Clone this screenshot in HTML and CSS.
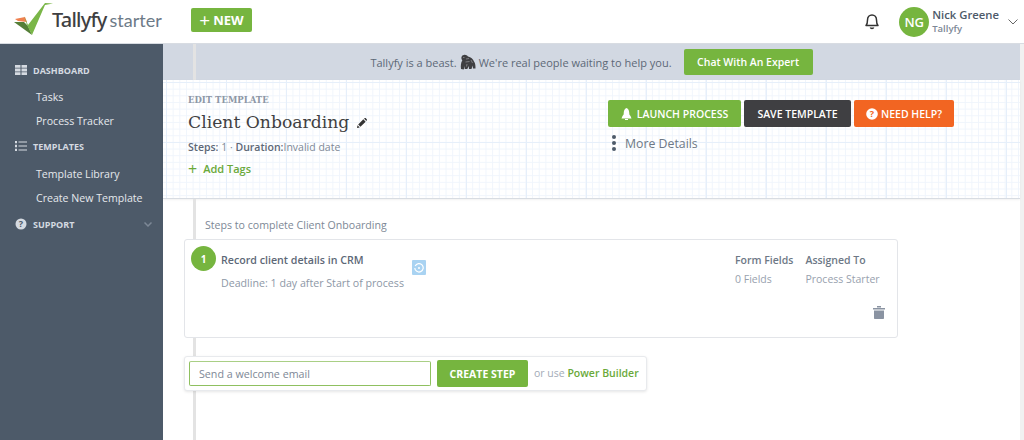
FILE: index.html
```html
<!DOCTYPE html>
<html lang="en">

<head>
    <meta charset="UTF-8">
    <meta name="viewport" content="width=device-width, initial-scale=1.0">
    <title>Tallyfy - Edit Template</title>
    <link rel="stylesheet" href="styles.css">
</head>

<body>
    <!-- Top bar -->
    <header class="topbar">
        <div class="logo">
            <svg class="logo-mark" width="38" height="38" viewBox="0 0 38 38">
                <path d="M0 20 L10 20 L14 24 L18 33 Z" fill="#557f38"/>
                <path d="M1 17 L11 15 L13 20 L4 19 Z" fill="#f0804e"/>
                <path d="M10 14 L14 23 L31 1 L39 1.500 L31 3 L18 33 L13 23 Z" fill="#7ab648"/>
            </svg>
            <span class="logo-name">Tallyfy</span>
            <span class="logo-plan">starter</span>
        </div>
        <button class="btn btn-green btn-new"><span class="plus">+</span>NEW</button>
        <div class="topbar-right">
            <svg class="bell" width="16" height="17" viewBox="0 0 16 17" fill="none" stroke="#333" stroke-width="1.5">
                <path d="M2 12.5 C3.5 11 3.5 9.5 3.5 7 C3.5 4 5.5 2 8 2 C10.5 2 12.5 4 12.5 7 C12.5 9.5 12.5 11 14 12.5 Z" stroke-linejoin="round"/>
                <path d="M6.3 14.5 C6.8 15.8 9.2 15.8 9.7 14.5"/>
            </svg>
            <div class="avatar">NG</div>
            <div class="user">
                <div class="user-name">Nick Greene</div>
                <div class="user-org">Tallyfy</div>
            </div>
            <svg class="caret" width="10" height="6" viewBox="0 0 10 6" fill="none" stroke="#666" stroke-width="1">
                <path d="M0.5 0.5 L5 5 L9.5 0.5"/>
            </svg>
        </div>
    </header>

    <div class="layout">
        <!-- Side menu -->
        <aside class="sidebar">
            <div class="nav-head nav-head-first">
                <svg width="12" height="10" viewBox="0 0 12 10" fill="#d5dae1">
                    <path d="M0 0h5.5v2.800H0zM6.5 0H12v2.800H6.500zM0 3.600h5.500v2.800H0zM6.500 3.600H12v2.800H6.500zM0 7.200h5.500V10H0zM6.500 7.200H12V10H6.500z"/>
                </svg>
                DASHBOARD
            </div>
            <a class="nav-link">Tasks</a>
            <a class="nav-link">Process Tracker</a>
            <div class="nav-head nav-head-templates">
                <svg width="12" height="10" viewBox="0 0 12 10" fill="#d5dae1">
                    <path d="M3.500 .5H12v1H3.500zM3.500 4.500H12v1H3.500zM3.500 8.500H12v1H3.500zM0 0h2v2H0zM.5 2.500h1v1h-1zM0 4h2v2H0zM.5 6.500h1v1h-1zM0 8h2v2H0z"/>
                </svg>
                TEMPLATES
            </div>
            <a class="nav-link">Template Library</a>
            <a class="nav-link">Create New Template</a>
            <div class="nav-head nav-head-support">
                <svg width="12" height="12" viewBox="0 0 12 12">
                    <circle cx="6" cy="6" r="5.500" fill="#d5dae1"/>
                    <text x="6" y="9" text-anchor="middle" class="help-mark" fill="#4d5a69">?</text>
                </svg>
                SUPPORT
                <svg class="nav-caret" width="8" height="5" viewBox="0 0 8 5" fill="none" stroke="#7d8896" stroke-width="1.500">
                    <path d="M.5 .5 L4 4 L7.500 .5"/>
                </svg>
            </div>
        </aside>

        <main class="main">
            <div class="banner">
                <span>Tallyfy is a beast.</span>
                <svg class="gorilla" width="16" height="16" viewBox="0 0 16 16">
                    <path d="M1.500 5 C1 3 2 1 4 1 C5.500 .5 7 1.500 8 2.500 C11 3 13 5 14 7.500 C15.500 9 15.500 12 15.500 14.500 L13 14.500 L12.500 11.500 L11.500 15 L9 15 L8.700 12 L7.300 15 L4.700 15 L5 12 L3.700 15.500 L1 15 C.5 12 1 8 2.300 6.500 Z" fill="#3f3f42"/>
                    <path d="M6 5 L9 4.500 M5.500 8 L9.500 7.500 M11 6 L12.500 9 M7 10 L6.500 12.500 M3 3.500 L4.500 3.500" fill="none" stroke="#8d8d90" stroke-width=".8"/>
                </svg>
                <span>We're real people waiting to help you.</span>
                <button class="btn btn-green btn-chat">Chat With An Expert</button>
            </div>

            <section class="template-head">
                <div class="template-info">
                    <div class="eyebrow">EDIT TEMPLATE</div>
                    <h1 class="template-title">Client Onboarding
                        <svg width="10" height="10" viewBox="0 0 11 11" fill="#333">
                            <path d="M0 11 L.6 8 L3 10.400 Z M1.300 7.200 L7 1.500 L9.500 4 L3.800 9.700 Z M7.800 .7 L8.500 0 C9 -.2 9.300 0 9.700 .3 L10.700 1.300 C11 1.700 11.100 2.100 10.800 2.500 L10.300 3.200 Z"/>
                        </svg>
                    </h1>
                    <div class="template-meta"><b>Steps:</b> 1 · <b>Duration:</b>Invalid date</div>
                    <div class="add-tags"><span class="add-plus">+</span>Add Tags</div>
                </div>
                <div class="template-actions">
                    <div class="action-row">
                        <button class="btn btn-green btn-action">
                            <svg width="11" height="12" viewBox="0 0 11 12" fill="#fff">
                                <path d="M5.500 0 C7.500 .5 8.300 3 8.300 5.500 C8.300 6.500 8.500 7 9.500 8 L10.500 10.500 L.5 10.500 L1.500 8 C2.500 7 2.700 6.500 2.700 5.500 C2.700 3 3.500 .5 5.500 0 Z M4 11 L7 11 L7 12 L4 12 Z"/>
                            </svg>
                            LAUNCH PROCESS
                        </button>
                        <button class="btn btn-dark btn-action">SAVE TEMPLATE</button>
                        <button class="btn btn-orange btn-action">
                            <svg width="12" height="12" viewBox="0 0 12 12">
                                <circle cx="6" cy="6" r="5.800" fill="#fff"/>
                                <text x="6" y="9.300" text-anchor="middle" class="help-mark" fill="#f26522">?</text>
                            </svg>
                            NEED HELP?
                        </button>
                    </div>
                    <div class="more-details">
                        <span class="dots"><i></i><i></i><i></i></span>
                        More Details
                    </div>
                </div>
            </section>

            <section class="steps">
                <div class="steps-title">Steps to complete Client Onboarding</div>
                <div class="step-card">
                    <div class="step-num">1</div>
                    <div class="step-body">
                        <div class="step-name">Record client details in CRM</div>
                        <div class="step-deadline">Deadline: 1 day after Start of process</div>
                    </div>
                    <div class="step-tag">
                        <svg width="10" height="10" viewBox="0 0 10 10" fill="none" stroke="#fff" stroke-width="1.200">
                            <path d="M1.200 3 A4.200 4.200 0 1 1 .8 5"/>
                            <circle cx="5" cy="5" r="1" fill="#fff" stroke="none"/>
                        </svg>
                    </div>
                    <div class="step-col step-col-fields">
                        <div class="col-label">Form Fields</div>
                        <div class="col-value">0 Fields</div>
                    </div>
                    <div class="step-col">
                        <div class="col-label">Assigned To</div>
                        <div class="col-value">Process Starter</div>
                    </div>
                    <svg class="trash" width="12" height="13" viewBox="0 0 12 13" fill="#8a93a2">
                        <path d="M0 2h12v1.500H0zM4 0h4v1.500H4zM1 4.500h10V12c0 .6-.4 1-1 1H2c-.6 0-1-.4-1-1z"/>
                    </svg>
                </div>
                <div class="new-step">
                    <input class="new-step-input" type="text" placeholder="Send a welcome email">
                    <button class="btn btn-green btn-create">CREATE STEP</button>
                    <span class="or-use">or use <a class="power">Power Builder</a></span>
                </div>
            </section>
        </main>
    </div>
</body>

</html>
```
FILE: styles.css
```css
* {
    box-sizing: border-box;
}

body {
    margin: 0;
    height: 440px;
    overflow: hidden;
    font-family: "Open Sans", sans-serif;
    font-size: 11px;
    color: #4d5a69;
    background-color: #fff;
}

/* Top bar */
.topbar {
    height: 44px;
    display: flex;
    align-items: center;
    background-color: #fff;
    border-bottom: 1px solid #d8dce2;
}

.logo {
    width: 191px;
    display: flex;
    align-items: center;
    padding-left: 14px;
    height: 44px;
}

.logo-mark {
    margin-top: -1px;
    overflow: visible;
}

.logo-name {
    margin-top: -4px;
    font-family: "Noto Sans", sans-serif;
    font-size: 20px;
    font-weight: 500;
    letter-spacing: -0.800px;
    color: #3f3f42;
}

.logo-plan {
    margin-top: -4px;
    margin-left: 3px;
    font-family: "Lato", sans-serif;
    font-size: 18px;
    color: #6d7a87;
}

.btn {
    border: none;
    border-radius: 2px;
    color: #fff;
    font-family: "Open Sans", sans-serif;
    font-weight: 600;
    cursor: pointer;
    padding: 0;
}

.btn-green {
    background-color: #76b53f;
}

.btn-dark {
    background-color: #3f3f42;
}

.btn-orange {
    background-color: #f26522;
}

.btn-new {
    width: 61px;
    height: 24px;
    font-size: 13px;
    font-weight: 700;
    margin-top: -3px;
    display: flex;
    align-items: center;
    justify-content: center;
}

.plus {
    font-size: 19px;
    font-weight: 400;
    line-height: 20px;
    margin-right: 3px;
}

.topbar-right {
    margin-left: auto;
    display: flex;
    align-items: center;
    padding-right: 6px;
}

.bell {
    margin-right: 19px;
}

.avatar {
    width: 30px;
    height: 30px;
    border-radius: 50%;
    background-color: #76b53f;
    color: #fff;
    font-size: 13px;
    font-weight: 600;
    display: flex;
    align-items: center;
    justify-content: center;
    margin-right: 3px;
}

.user {
    margin-right: 9px;
}

.user-name {
    font-size: 11.300px;
    font-weight: 600;
    line-height: 15px;
    color: #4d5a69;
}

.user-org {
    font-size: 9.500px;
    font-weight: 600;
    line-height: 14px;
    color: #7d8896;
}

/* Layout */
.layout {
    display: flex;
    height: 396px;
}

.sidebar {
    width: 163px;
    flex-shrink: 0;
    background-color: #4d5a69;
    color: #e6e9ed;
    padding-top: 19px;
}

.nav-head {
    position: relative;
    display: flex;
    align-items: center;
    height: 14px;
    padding-left: 15px;
    font-size: 9px;
    font-weight: 700;
    color: #d5dae1;
}

.nav-head svg {
    margin-right: 6px;
}

.nav-head-first {
    margin-bottom: 8px;
}

.nav-head-templates {
    margin-top: 6px;
    margin-bottom: 9px;
}

.nav-head-support {
    margin-top: 7px;
}

.nav-head svg.nav-caret {
    margin: 0;
    position: absolute;
    right: 11px;
    top: 5px;
}

.help-mark {
    font-size: 9px;
    font-weight: 700;
    font-family: "Open Sans", sans-serif;
}

.nav-link {
    display: block;
    padding-left: 36px;
    font-size: 10.600px;
    font-weight: 400;
    line-height: 24px;
    color: #e6e9ed;
}

/* The strip on the right is the page's scrollbar track */
.main {
    flex: 1;
    display: flex;
    flex-direction: column;
    border-right: 4px solid #f1f1f1;
}

/* Banner */
.banner {
    height: 36px;
    display: flex;
    align-items: center;
    justify-content: center;
    gap: 3px;
    background-color: #d2d8e2;
    background-image: linear-gradient(#e3e3e3, #e3e3e3);
    background-size: 3px 100%;
    background-position: 30px 0;
    background-repeat: no-repeat;
    font-size: 11px;
    font-weight: 400;
    color: #5d6877;
}

.btn-chat {
    width: 129px;
    height: 26px;
    margin-left: 9px;
    font-size: 10.500px;
}

/* Template header */
.template-head {
    height: 119px;
    display: flex;
    justify-content: space-between;
    padding: 14px 66px 0 25px;
    background-color: #fff;
    background-image:
        linear-gradient(#e6effa 1px, transparent 1px),
        linear-gradient(90deg, #e6effa 1px, transparent 1px),
        linear-gradient(#f0f5fc 1px, transparent 1px),
        linear-gradient(90deg, #f0f5fc 1px, transparent 1px);
    background-size: 60px 60px, 60px 60px, 6.667px 6.667px, 6.667px 6.667px;
    background-position: 3px 2px;
    border-bottom: 1px solid #d8dce2;
    box-shadow: 0 1px 2px rgba(0, 0, 0, 0.06);
}

.eyebrow {
    font-family: "DejaVu Serif", serif;
    font-size: 8.500px;
    font-weight: 700;
    color: #8d97a6;
    line-height: 13px;
}

.template-title {
    margin: 2px 0 0;
    font-family: "DejaVu Serif", serif;
    font-size: 17.200px;
    font-weight: 400;
    line-height: 26px;
    color: #3f3f42;
}

.template-title svg {
    margin-left: 2px;
}

.template-meta {
    margin-top: 5px;
    font-size: 10.500px;
    line-height: 14px;
    color: #7d8896;
}

.template-meta b {
    font-weight: 600;
    color: #5d6877;
}

.add-tags {
    margin-top: 8px;
    display: flex;
    align-items: center;
    font-size: 11px;
    font-weight: 600;
    line-height: 14px;
    color: #6aa93a;
}

.add-plus {
    font-size: 16px;
    font-weight: 400;
    margin-right: 6px;
}

.template-actions {
    padding-top: 6px;
}

.action-row {
    display: flex;
    gap: 3px;
}

.btn-action {
    height: 27px;
    font-size: 10.500px;
    display: flex;
    align-items: center;
    justify-content: center;
    gap: 5px;
}

.btn-action:nth-child(1) {
    width: 133px;
}

.btn-action:nth-child(2) {
    width: 107px;
}

.btn-action:nth-child(3) {
    width: 100px;
    gap: 3px;
}

.more-details {
    margin-top: 6px;
    height: 20px;
    display: flex;
    align-items: center;
    gap: 9px;
    padding-left: 4px;
    font-size: 12.300px;
    color: #6d7886;
}

.dots {
    display: flex;
    flex-direction: column;
    gap: 2px;
}

.dots i {
    display: block;
    width: 4px;
    height: 4px;
    border-radius: 50%;
    background-color: #4d5a69;
}

/* Steps */
.steps {
    flex: 1;
    padding: 19px 0 0 21px;
    background-image: linear-gradient(#e3e3e3, #e3e3e3);
    background-size: 3px 100%;
    background-position: 30px 0;
    background-repeat: no-repeat;
}

.steps-title {
    margin-left: 21px;
    font-size: 10.600px;
    line-height: 15px;
    color: #7d8896;
}

.step-card {
    position: relative;
    margin-top: 6px;
    width: 714px;
    height: 99px;
    display: flex;
    background-color: #fff;
    border: 1px solid #e3e5e9;
    border-radius: 3px;
    padding: 6px 0 0 6px;
}

.step-num {
    width: 25px;
    height: 25px;
    border-radius: 50%;
    background-color: #76b53f;
    color: #fff;
    font-size: 10px;
    font-weight: 700;
    display: flex;
    align-items: center;
    justify-content: center;
    flex-shrink: 0;
}

.step-body {
    margin-left: 5px;
    padding-top: 7px;
    width: 191px;
}

.step-name {
    font-size: 10.650px;
    font-weight: 600;
    line-height: 15px;
    color: #5d6877;
}

.step-deadline {
    margin-top: 8px;
    font-size: 10.650px;
    line-height: 15px;
    color: #8d97a6;
    white-space: nowrap;
}

.step-tag {
    width: 14px;
    height: 15px;
    margin-top: 14px;
    background-color: #a9d3f2;
    border-radius: 1px;
    display: flex;
    align-items: center;
    justify-content: center;
}

.step-col {
    padding-top: 7px;
    margin-left: 12px;
}

.step-col-fields {
    margin-left: 309px;
}

.col-label {
    font-size: 10.500px;
    font-weight: 600;
    line-height: 15px;
    color: #6d7886;
}

.col-value {
    margin-top: 4px;
    font-size: 10.500px;
    line-height: 15px;
    color: #98a1ae;
    white-space: nowrap;
}

.trash {
    position: absolute;
    right: 12px;
    top: 66px;
}

.new-step {
    margin-top: 18px;
    width: 463px;
    height: 35px;
    display: flex;
    align-items: center;
    background-color: #fff;
    border: 1px solid #e8eaed;
    border-radius: 3px;
    box-shadow: 0 1px 3px rgba(0, 0, 0, 0.1);
    padding-left: 4px;
}

.new-step-input {
    width: 242px;
    height: 25px;
    border: 1px solid #8fc060;
    border-top-color: #a9cf85;
    border-radius: 2px;
    padding: 0 9px;
    font-family: "Open Sans", sans-serif;
    font-size: 10.700px;
    color: #5d6877;
    outline: none;
}

.new-step-input::placeholder {
    color: #7d8896;
    opacity: 1;
}

.btn-create {
    width: 91px;
    height: 27px;
    margin-left: 6px;
    font-size: 10.500px;
    font-weight: 700;
}

.or-use {
    margin-left: 6px;
    margin-top: -2px;
    font-size: 10.500px;
    color: #a3abb7;
    white-space: nowrap;
}

.power {
    font-weight: 600;
    color: #6aa93a;
}
```
